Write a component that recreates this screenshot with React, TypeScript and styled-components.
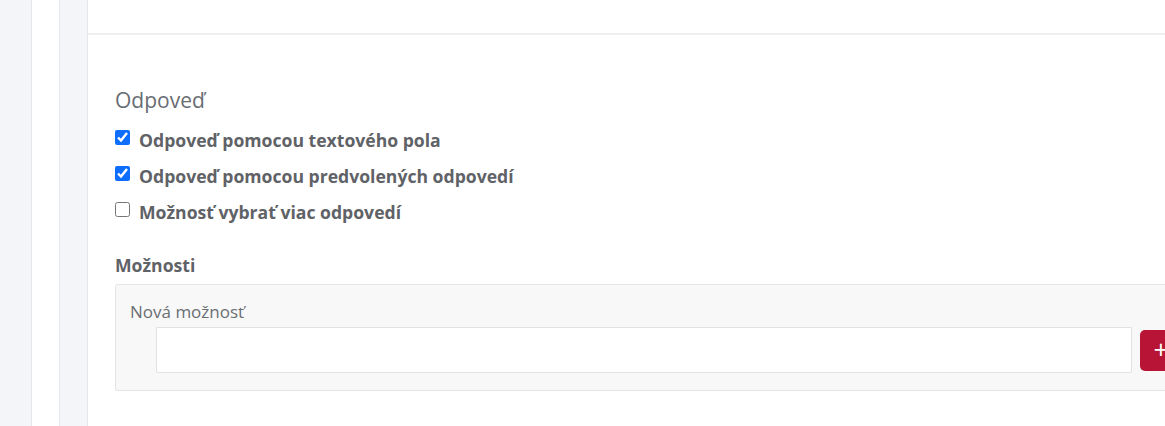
import React from 'react';
import styled, { createGlobalStyle } from 'styled-components';

const GlobalStyle = createGlobalStyle`
  html, body {
    margin: 0;
    padding: 0;
    background: #f4f5f9;
    overflow: hidden;
  }
  body {
    font-family: "Open Sans", "Liberation Sans", sans-serif;
  }
`;

const Page = styled.div`
  display: flex;
  width: 1165px;
  height: 426px;
  overflow: hidden;
`;

const Gutter = styled.div<{ $bg: string; $width: number }>`
  flex: 0 0 ${(p) => p.$width}px;
  background: ${(p) => p.$bg};
  border-right: 1px solid #e6e7ec;
`;

const Main = styled.div`
  flex: 1 0 auto;
  display: flex;
  flex-direction: column;
  background: #fff;
  min-width: 1200px;
`;

const TopCard = styled.div`
  height: 33px;
  border-bottom: 2px solid #efeff1;
`;

const Body = styled.div`
  padding: 52px 0 0 27px;
`;

const Heading = styled.h4`
  margin: 0 0 9px;
  font-size: 21px;
  line-height: 26px;
  font-weight: 400;
  color: #686d72;
`;

const CheckRow = styled.label`
  display: flex;
  align-items: center;
  height: 36px;
  font-size: 17.6px;
  font-weight: 700;
  color: #5f6266;
  cursor: pointer;
`;

const Box = styled.input`
  width: 15px;
  height: 15px;
  margin: 0 9px 0 0;
  accent-color: #0d6efd;
  position: relative;
  top: -3px;
`;

const SubLabel = styled.div`
  margin-top: 23px;
  font-size: 17.6px;
  font-weight: 700;
  color: #5f6266;
  line-height: 24px;
`;

const OptionsPanel = styled.div`
  margin-top: 7px;
  width: 1100px;
  background: #f8f8f8;
  border: 1px solid #e5e5e5;
  border-radius: 2px;
  padding: 12px 14px 17px;
`;

const FieldLabel = styled.div`
  font-size: 17px;
  line-height: 30px;
  color: #6a6e72;
`;

const FieldRow = styled.div`
  display: flex;
  align-items: center;
  gap: 8px;
  padding-left: 26px;
`;

const TextInput = styled.input`
  width: 976px;
  height: 46px;
  box-sizing: border-box;
  border: 1px solid #e2e2e2;
  border-radius: 1px;
  background: #fff;
  outline: none;
  font-size: 16px;
  padding: 0 12px;
`;

const AddButton = styled.button`
  width: 42px;
  height: 41px;
  border: none;
  border-radius: 5px;
  background: #b81536;
  color: #fff;
  font-size: 26px;
  line-height: 1;
  font-family: "Open Sans", "Liberation Sans", sans-serif;
  padding: 0 0 3px 0;
  cursor: pointer;
`;

const App = () => {
  return (
    <>
      <GlobalStyle />
      <Page>
        <Gutter $bg="#f4f5f9" $width={31} />
        <Gutter $bg="#ffffff" $width={27} />
        <Gutter $bg="#f4f5f9" $width={27} />
        <Main>
          <TopCard />
          <Body>
            <Heading>Odpoveď</Heading>
            <CheckRow>
              <Box type="checkbox" defaultChecked />
              Odpoveď pomocou textového pola
            </CheckRow>
            <CheckRow>
              <Box type="checkbox" defaultChecked />
              Odpoveď pomocou predvolených odpovedí
            </CheckRow>
            <CheckRow>
              <Box type="checkbox" />
              Možnosť vybrať viac odpovedí
            </CheckRow>
            <SubLabel>Možnosti</SubLabel>
            <OptionsPanel>
              <FieldLabel>Nová možnosť</FieldLabel>
              <FieldRow>
                <TextInput type="text" />
                <AddButton>+</AddButton>
              </FieldRow>
            </OptionsPanel>
          </Body>
        </Main>
      </Page>
    </>
  );
};

export default App;
